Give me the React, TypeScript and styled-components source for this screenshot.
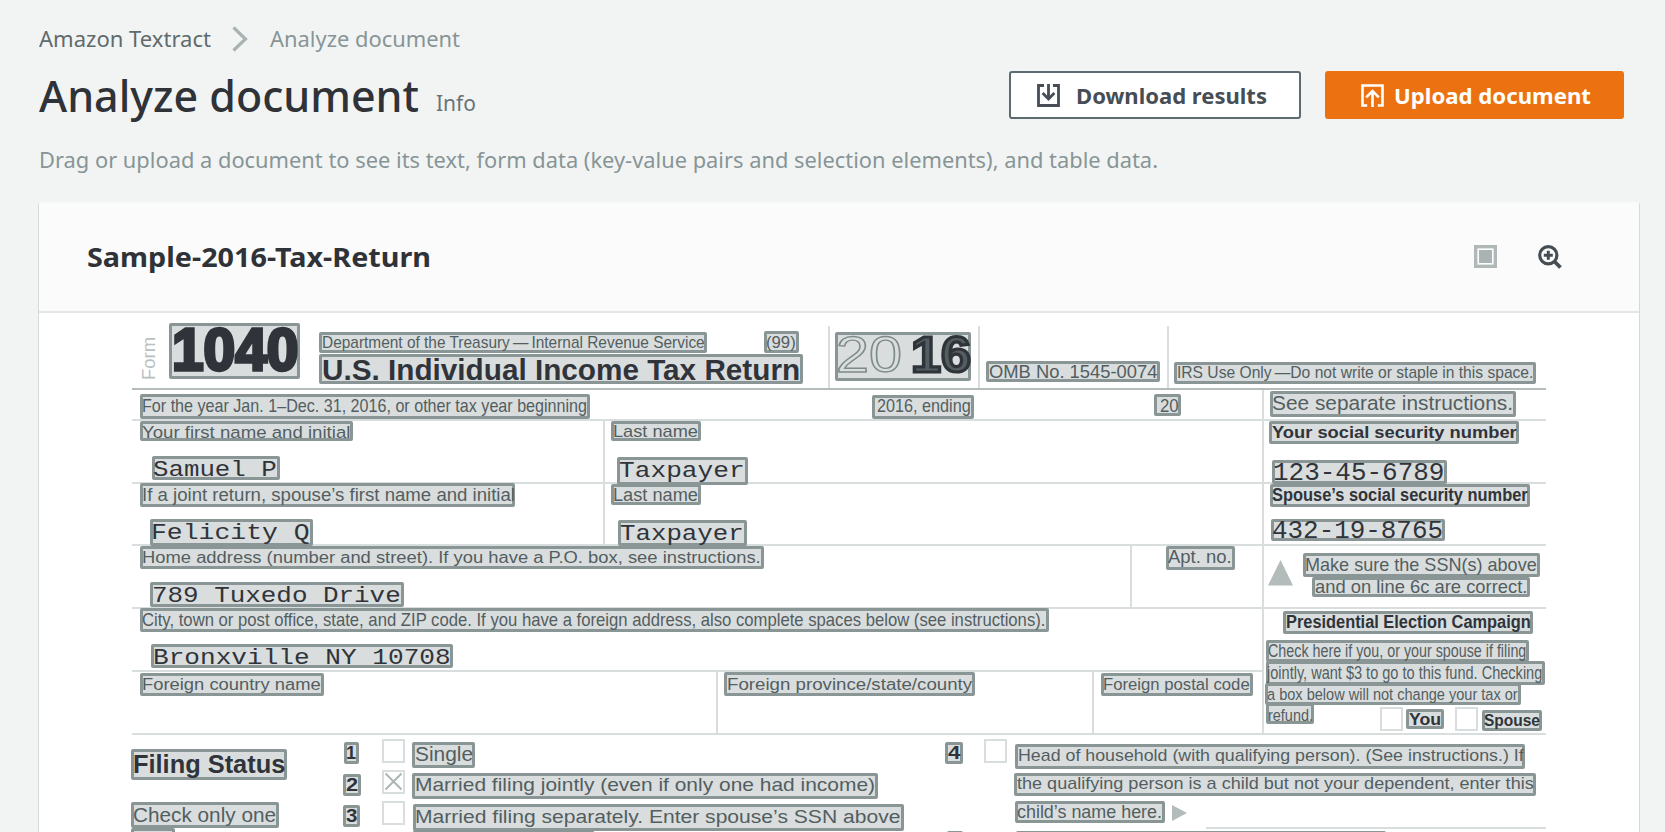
import React, { useLayoutEffect, useRef, useState } from "react";
import styled, { createGlobalStyle, css } from "styled-components";

const GlobalStyle = createGlobalStyle`
  * { box-sizing: border-box; }
  body { margin: 0; background: #f2f4f4; }
`;

const UI_FONT = '"Noto Sans", "Open Sans", sans-serif';
const FORM_FONT = '"Liberation Sans", Arial, sans-serif';
const TYPED_FONT = '"Liberation Mono", "Courier New", monospace';

/* ---------- text set to a fixed measure ---------- */

const Measure = styled.span<{ $w: number }>`
  display: inline-block;
  flex: none;
  width: ${(p) => p.$w}px;
  white-space: nowrap;
`;

const Glyphs = styled.span`
  display: inline-block;
  white-space: pre;
  transform-origin: 0 50%;
`;

function Fit({ w, children }: { w: number; children: React.ReactNode }) {
  const ref = useRef<HTMLSpanElement>(null);
  const [scale, setScale] = useState(1);
  useLayoutEffect(() => {
    const el = ref.current;
    if (!el) return;
    const natural = parseFloat(getComputedStyle(el).width);
    if (natural > 0) setScale(w / natural);
  }, [w, children]);
  return (
    <Measure $w={w}>
      <Glyphs ref={ref} style={{ transform: `scaleX(${scale})` }}>
        {children}
      </Glyphs>
    </Measure>
  );
}

/* ---------- page chrome ---------- */

const Page = styled.div`
  width: 100%;
  height: 832px;
  overflow: hidden;
  padding: 23px 25px 0 38px;
  font-family: ${UI_FONT};
  color: #2f3237;
`;

const Breadcrumbs = styled.nav`
  display: flex;
  align-items: center;
  height: 32px;
  padding-left: 1px;
  font-size: 22.4px;
  line-height: 32px;
  color: #5f6b6d;
`;

const Chevron = styled.svg`
  display: block;
  margin: 0 22px 0 21px;
`;

const CurrentCrumb = styled.span`
  color: #879596;
`;

const TitleRow = styled.header`
  display: flex;
  align-items: flex-start;
  justify-content: space-between;
  height: 80px;
  padding: 10px 16px 0 1px;
`;

const Heading = styled.div`
  display: flex;
  align-items: baseline;
  gap: 17px;
`;

const Title = styled.h1`
  margin: 0;
  font-size: 44px;
  font-weight: 500;
  line-height: 60px;
  color: #2f3237;
`;

const InfoLink = styled.a`
  position: relative;
  top: -1px;
  font-size: 22px;
  line-height: 30px;
  color: #687476;
`;

const Actions = styled.div`
  display: flex;
  gap: 24px;
  padding-top: 6px;
`;

const Button = styled.button<{ $primary?: boolean }>`
  display: flex;
  align-items: center;
  height: 48px;
  width: ${(p) => (p.$primary ? 299 : 292)}px;
  padding: 0 0 0 ${(p) => (p.$primary ? 34 : 26)}px;
  gap: ${(p) => (p.$primary ? 9 : 16)}px;
  border: 2px solid ${(p) => (p.$primary ? "#ec7211" : "#5c6b70")};
  border-radius: 3px;
  background: ${(p) => (p.$primary ? "#ec7211" : "#fff")};
  color: ${(p) => (p.$primary ? "#fff" : "#474d54")};
  font-family: ${UI_FONT};
  font-size: 22px;
  font-weight: 700;
  line-height: 28px;

  svg { flex: none; }
  > span { margin-top: -1px; }
`;

const Description = styled.p`
  margin: 0;
  padding: 8px 0 0 1px;
  height: 67px;
  font-size: 22px;
  line-height: 32px;
  color: #879596;
`;

const Panel = styled.main`
  width: 1602px;
  height: 640px;
  border: solid #d5dbdb;
  border-width: 2px 1px 1px;
  border-top-color: #f8f9f9;
  background: #fff;
`;

const PanelHeader = styled.div`
  display: flex;
  align-items: center;
  justify-content: space-between;
  height: 109px;
  padding: 0 77px 2px 48px;
  border-bottom: 2px solid #e2e6e6;
  background: #fbfbfb;
`;

const PanelTitle = styled.h2`
  margin: 0;
  font-size: 27px;
  font-weight: 700;
  line-height: 36px;
`;

const PanelTools = styled.div`
  display: flex;
  align-items: center;
  gap: 41px;
  svg { display: block; }
`;

/* ---------- scanned form ---------- */

const Viewer = styled.section`
  position: relative;
  height: 527px;
  overflow: hidden;
  padding: 13px 0 0 93px;
`;

const Sheet = styled.div`
  width: 1414px;
`;

const rule = "2px solid #d8dddd";

const Masthead = styled.div`
  display: grid;
  grid-template-columns: 696px 150px 189px 1fr;
  height: 64px;
  border-bottom: 2px solid #b3bbbb;
`;

const Rest = styled.div`
  display: grid;
  grid-template-columns: 1130px 284px;
`;

const Column = styled.div<{ $ruled?: boolean }>`
  ${(p) => p.$ruled && css`border-left: ${rule};`}
`;

const Row = styled.div<{ $h: number; $cols?: string }>`
  display: grid;
  grid-template-columns: ${(p) => p.$cols || "1fr"};
  height: ${(p) => p.$h}px;
  border-bottom: ${rule};
`;

const FilingSection = styled.div`
  display: flex;
  justify-content: flex-end;
`;

const AnswerLine = styled.div`
  width: 340px;
  height: 94px;
  border-bottom: ${rule};
`;

const Cell = styled.div<{ $ruled?: boolean }>`
  border-left: ${(p) => (p.$ruled ? rule : "none")};
`;

/* Detected blocks lie over the scan at the geometry found for them. */
const Overlay = styled.div`
  position: absolute;
  inset: 0;
`;

const At = styled.div<{ $x: number; $y: number; $w: number; $h: number }>`
  position: absolute;
  left: ${(p) => p.$x - 39}px;
  top: ${(p) => p.$y - 313}px;
  width: ${(p) => p.$w}px;
  height: ${(p) => p.$h}px;
`;

type Tone = "label" | "strong" | "typed" | "digits";

const Block = styled(At)<{ $size: number; $tone: Tone; $pad: number; $dy: number }>`
  display: flex;
  align-items: center;
  border: 3px solid #8a9696;
  border-radius: 2px;
  background: #d9dddd;
  font-family: ${(p) => (p.$tone === "typed" ? TYPED_FONT : FORM_FONT)};
  font-weight: ${(p) => (p.$tone === "strong" || p.$tone === "digits" ? 700 : 400)};
  font-size: ${(p) => p.$size}px;
  line-height: 0;
  color: ${(p) => (p.$tone === "label" ? "#535e61" : "#30343a")};
  ${(p) => p.$tone === "digits" && css`-webkit-text-stroke: 3.4px #30343a;`}

  > span:first-child { margin-left: ${(p) => p.$pad - 3}px; }
  > span { margin-top: ${(p) => p.$dy * 2}px; }
`;

const Hollow = styled.span`
  color: transparent;
  -webkit-text-stroke: 1.4px #7f8b8b;
`;

const Black = styled.span`
  margin-left: 9px;
  font-weight: 700;
  -webkit-text-stroke: 3.2px #30343a;
`;

const CheckBox = styled(At)`
  border: 2px solid #d8dddd;
  background: #fff;
  svg { display: block; }
`;

const SideLabel = styled(At)`
  display: flex;
  align-items: center;
  justify-content: center;
  transform: rotate(-90deg);
  font-family: ${FORM_FONT};
  font-size: 18px;
  line-height: 17px;
  color: #b9c0c0;
`;

type BlockData = {
  box: [number, number, number, number];
  text?: string;
  size?: number;
  tone?: Tone;
  pad?: number;
  end?: number;
  dy?: number;
};

/* box: left, top, right, bottom */
const blocks: BlockData[] = [
  { box: [169, 322.7, 300.3, 379], text: "1040", size: 58.5, tone: "digits", pad: 3, end: 2, dy: -0.5 },
  { box: [319.3, 332.3, 707.3, 353], text: "Department of the Treasury\u2009—\u2009Internal Revenue Service", size: 16.4, dy: -0.5 },
  { box: [763.7, 331, 798.7, 353], text: "(99)", size: 16.5, dy: -0.5 },
  { box: [319.3, 354, 802.7, 384], text: "U.S. Individual Income Tax Return", size: 29.5, tone: "strong", dy: 0.5 },
  { box: [986.3, 361.3, 1160, 382.3], text: "OMB No. 1545-0074", size: 17.8, dy: 0.5 },
  { box: [1174.3, 362, 1536, 384], text: "IRS Use Only\u2009—Do not write or staple in this space.", size: 16.2, dy: -1 },
  { box: [140, 394.3, 590.3, 419], text: "For the year Jan. 1–Dec. 31, 2016, or other tax year beginning", size: 18.5, dy: -0.5 },
  { box: [872.3, 395, 974, 419], text: "2016, ending", size: 18.5, pad: 5, dy: -1 },
  { box: [1154.3, 394, 1181, 416], text: "20", size: 18.5, pad: 6, end: 2, dy: 0.5 },
  { box: [1270, 390.7, 1516.3, 417], text: "See separate instructions.", size: 20.5, dy: -0.5 },
  { box: [140, 421, 352.7, 441.3], text: "Your first name and initial", size: 16.3, end: 2, dy: 1 },
  { box: [610.7, 421.3, 701, 441], text: "Last name", size: 17, dy: 1 },
  { box: [1269.3, 420.7, 1519.3, 444], text: "Your social security number", size: 16.3, tone: "strong" },
  { box: [152.3, 456, 280, 480], text: "Samuel P", size: 22.5, tone: "typed", pad: 1, dy: 2 },
  { box: [617, 456.7, 748, 485], text: "Taxpayer", size: 22.5, tone: "typed", dy: 0 },
  { box: [1272.3, 459.7, 1446.7, 484.5], text: "123-45-6789", size: 25, tone: "typed", pad: 1, end: 2, dy: 1.5 },
  { box: [140, 483, 515.3, 507.3], text: "If a joint return, spouse’s first name and initial", size: 17.5, end: 0 },
  { box: [610.7, 483.7, 701, 505], text: "Last name", size: 17.5, dy: 1 },
  { box: [1270, 483.7, 1530, 507], text: "Spouse’s social security number", size: 17.5, tone: "strong", end: 2 },
  { box: [150, 519, 312.7, 545.7], text: "Felicity Q", size: 22.5, tone: "typed", pad: 1, dy: 0.5 },
  { box: [618, 520, 746.7, 546], text: "Taxpayer", size: 22.5, tone: "typed", pad: 2, dy: 0.5 },
  { box: [1271.3, 518.7, 1445.3, 541.5], text: "432-19-8765", size: 25, tone: "typed", pad: 1, end: 2, dy: 1.5 },
  { box: [140, 545.7, 764, 569.3], text: "Home address (number and street). If you have a P.O. box, see instructions.", size: 17.3, dy: -0.5 },
  { box: [1166, 545.7, 1235, 569.7], text: "Apt. no.", size: 18, dy: -0.5 },
  { box: [150.3, 581.7, 404, 606.7], text: "789 Tuxedo Drive", size: 22.5, tone: "typed", pad: 2, dy: 2 },
  { box: [140, 608.3, 1048.7, 632.3], text: "City, town or post office, state, and ZIP code. If you have a foreign address, also complete spaces below (see instructions).", size: 17.7, dy: -0.5 },
  { box: [151, 643.7, 452.7, 668.3], text: "Bronxville NY 10708", size: 22.5, tone: "typed", pad: 2, end: 2, dy: 2 },
  { box: [140, 673.3, 324, 696.3], text: "Foreign country name", size: 17.3, dy: -0.5 },
  { box: [724.3, 672.3, 974.7, 696], text: "Foreign province/state/county", size: 17.3 },
  { box: [1101, 673, 1253, 696], text: "Foreign postal code", size: 17.3, dy: -0.5 },
  { box: [1303, 552.7, 1540, 577], text: "Make sure the SSN(s) above", size: 17.9 },
  { box: [1312.3, 576.5, 1530, 596.5], text: "and on line 6c are correct.", size: 17.7 },
  { box: [1283.3, 610.7, 1533.3, 634.3], text: "Presidential Election Campaign", size: 17.5, tone: "strong" },
  { box: [1265.7, 640.3, 1529.3, 662], text: "Check here if you, or your spouse if filing", size: 17.5 },
  { box: [1265.7, 661.3, 1545, 684.7], text: "jointly, want $3 to go to this fund. Checking", size: 17.5, pad: 1 },
  { box: [1265, 683.3, 1521, 705], text: "a box below will not change your tax or", size: 17.2, dy: -0.5 },
  { box: [1265.7, 703, 1314, 724], text: "refund.", size: 17.2, end: 1, dy: 1 },
  { box: [1406.3, 709, 1443.7, 729.3], text: "You", size: 16, tone: "strong", dy: 1 },
  { box: [1481.7, 710.3, 1542, 731.3], text: "Spouse", size: 16, tone: "strong", end: 2 },
  { box: [130.7, 749.3, 287.3, 780.3], text: "Filing Status", size: 25, tone: "strong", end: 2, dy: -1 },
  { box: [130.7, 802, 279, 828], text: "Check only one", size: 19.8, dy: -0.5 },
  { box: [130.7, 827.5, 175.3, 850] },
  { box: [343.7, 742.3, 358.7, 764], text: "1", size: 17.5, tone: "strong", pad: 2 },
  { box: [343.3, 774.3, 360.7, 796], text: "2", size: 17.5, tone: "strong" },
  { box: [343.3, 805, 360, 827], text: "3", size: 17.5, tone: "strong" },
  { box: [412.3, 741.7, 474.7, 768.3], text: "Single", size: 20, end: 2, dy: -1 },
  { box: [412.3, 773, 877.7, 798.7], text: "Married filing jointly (even if only one had income)", size: 19, dy: -0.5 },
  { box: [413, 804.3, 903.7, 831], text: "Married filing separately. Enter spouse’s SSN above", size: 19.2, dy: -0.5 },
  { box: [413, 830, 594, 852] },
  { box: [945.3, 742.3, 963, 764], text: "4", size: 17.5, tone: "strong" },
  { box: [947, 831, 962.5, 852] },
  { box: [1015.3, 743.7, 1525.3, 768.7], text: "Head of household (with qualifying person). (See instructions.) If", size: 17, end: 2, dy: -0.5 },
  { box: [1014.3, 772.7, 1536.3, 796.3], text: "the qualifying person is a child but not your dependent, enter this", size: 16.6, dy: -0.5 },
  { box: [1014.7, 800.7, 1165, 823], text: "child’s name here.", size: 17.5, dy: 0.5 },
  { box: [1016, 831, 1386, 852] },
];

const checkBoxes: { x: number; y: number; checked?: boolean }[] = [
  { x: 382, y: 739 },
  { x: 382, y: 770, checked: true },
  { x: 382, y: 801 },
  { x: 984, y: 739 },
  { x: 1380, y: 707 },
  { x: 1455, y: 707 },
];

function DetectedBlock({ box, text, size = 17, tone = "label", pad = 2.3, end = 3, dy = 0 }: BlockData) {
  const [l, t, r, b] = box;
  return (
    <Block $x={l} $y={t} $w={r - l} $h={b - t} $size={size} $tone={tone} $pad={pad} $dy={dy}>
      {text && <Fit w={r - l - pad - end}>{text}</Fit>}
    </Block>
  );
}

function DownloadIcon() {
  return (
    <svg width="23" height="23" viewBox="0 0 23 23" fill="none" stroke="#474d54" strokeWidth="2.8">
      <path d="M7 1.5H1.5v20h20v-20H16" />
      <path d="M11.5 0v14.6M5.6 9l5.9 5.9L17.4 9" />
    </svg>
  );
}

function UploadIcon() {
  return (
    <svg width="23" height="23" viewBox="0 0 23 23" fill="none" stroke="#fff" strokeWidth="2.6">
      <path d="M6.2 21.5H1.5v-20h20v20h-4.7" />
      <path d="M11.5 23V7.6M5.2 13.4l6.3-6.3 6.3 6.3" />
    </svg>
  );
}

export default function App() {
  return (
    <>
      <GlobalStyle />
      <Page>
        <Breadcrumbs>
          <Fit w={172}>Amazon Textract</Fit>
          <Chevron width="16" height="26" viewBox="0 0 16 26" fill="none" stroke="#aab3b3" strokeWidth="3.2">
            <path d="M1.5 1.5L13.5 13L1.5 24.5" />
          </Chevron>
          <CurrentCrumb><Fit w={190}>Analyze document</Fit></CurrentCrumb>
        </Breadcrumbs>

        <TitleRow>
          <Heading>
            <Title><Fit w={380}>Analyze document</Fit></Title>
            <InfoLink><Fit w={40}>Info</Fit></InfoLink>
          </Heading>
          <Actions>
            <Button><DownloadIcon /><Fit w={191}>Download results</Fit></Button>
            <Button $primary><UploadIcon /><Fit w={197}>Upload document</Fit></Button>
          </Actions>
        </TitleRow>

        <Description>
          <Fit w={1119}>Drag or upload a document to see its text, form data (key-value pairs and selection elements), and table data.</Fit>
        </Description>

        <Panel>
          <PanelHeader>
            <PanelTitle><Fit w={344}>Sample-2016-Tax-Return</Fit></PanelTitle>
            <PanelTools>
              <svg width="23" height="23" viewBox="0 0 23 23">
                <rect x="1.7" y="1.7" width="19.6" height="19.6" fill="#fff" stroke="#b0b8b8" strokeWidth="3.4" />
                <rect x="5" y="5" width="13" height="13" fill="#aab3b3" />
              </svg>
              <svg width="24" height="24" viewBox="0 0 24 24" fill="none" stroke="#474d54">
                <circle cx="10.3" cy="10.3" r="8.6" strokeWidth="3.2" />
                <path d="M16.5 16.5l6 6" strokeWidth="3.8" />
                <path d="M10.3 5.8v9M5.8 10.3h9" strokeWidth="3" />
              </svg>
            </PanelTools>
          </PanelHeader>

          <Viewer>
            <Sheet>
              <Masthead>
                <Cell />
                <Cell $ruled />
                <Cell $ruled />
                <Cell $ruled />
              </Masthead>
              <Rest>
                <Column>
                  <Row $h={31} />
                  <Row $h={63} $cols="471px 1fr"><Cell /><Cell $ruled /></Row>
                  <Row $h={62} $cols="471px 1fr"><Cell /><Cell $ruled /></Row>
                  <Row $h={63} $cols="998px 1fr"><Cell /><Cell $ruled /></Row>
                  <Row $h={63} />
                  <Row $h={63} $cols="584px 376px 1fr"><Cell /><Cell $ruled /><Cell $ruled /></Row>
                </Column>
                <Column $ruled>
                  <Row $h={31} />
                  <Row $h={63} />
                  <Row $h={62} />
                  <Row $h={63} />
                  <Row $h={126} />
                </Column>
              </Rest>
              <FilingSection>
                <AnswerLine />
              </FilingSection>
            </Sheet>

            <Overlay>
              <SideLabel $x={128} $y={350} $w={43} $h={17}><Fit w={43}>Form</Fit></SideLabel>
              {blocks.map((b, i) => (
                <DetectedBlock key={i} {...b} />
              ))}
              <Block $x={834.7} $y={332.3} $w={136.3} $h={48.4} $size={50} $tone="label" $pad={1} $dy={-1}>
                <Hollow><Fit w={66}>20</Fit></Hollow>
                <Black><Fit w={60}>16</Fit></Black>
              </Block>
              {checkBoxes.map((c, i) => (
                <CheckBox key={i} $x={c.x} $y={c.y} $w={23} $h={24}>
                  {c.checked && (
                    <svg width="19" height="20" viewBox="0 0 19 20" stroke="#adb5b5" strokeWidth="2">
                      <path d="M1.5 1.5l16 16M17.5 1.5l-16 16" />
                    </svg>
                  )}
                </CheckBox>
              ))}
              <At $x={1268} $y={560} $w={25} $h={26}>
                <svg width="25" height="26" viewBox="0 0 25 26"><path d="M12.5 0L25 25.5H0z" fill="#b3bbbb" /></svg>
              </At>
              <At $x={1172} $y={804} $w={15} $h={16}>
                <svg width="15" height="16" viewBox="0 0 15 16"><path d="M0 0l15 8L0 16z" fill="#b3bbbb" /></svg>
              </At>
            </Overlay>
          </Viewer>
        </Panel>
      </Page>
    </>
  );
}
